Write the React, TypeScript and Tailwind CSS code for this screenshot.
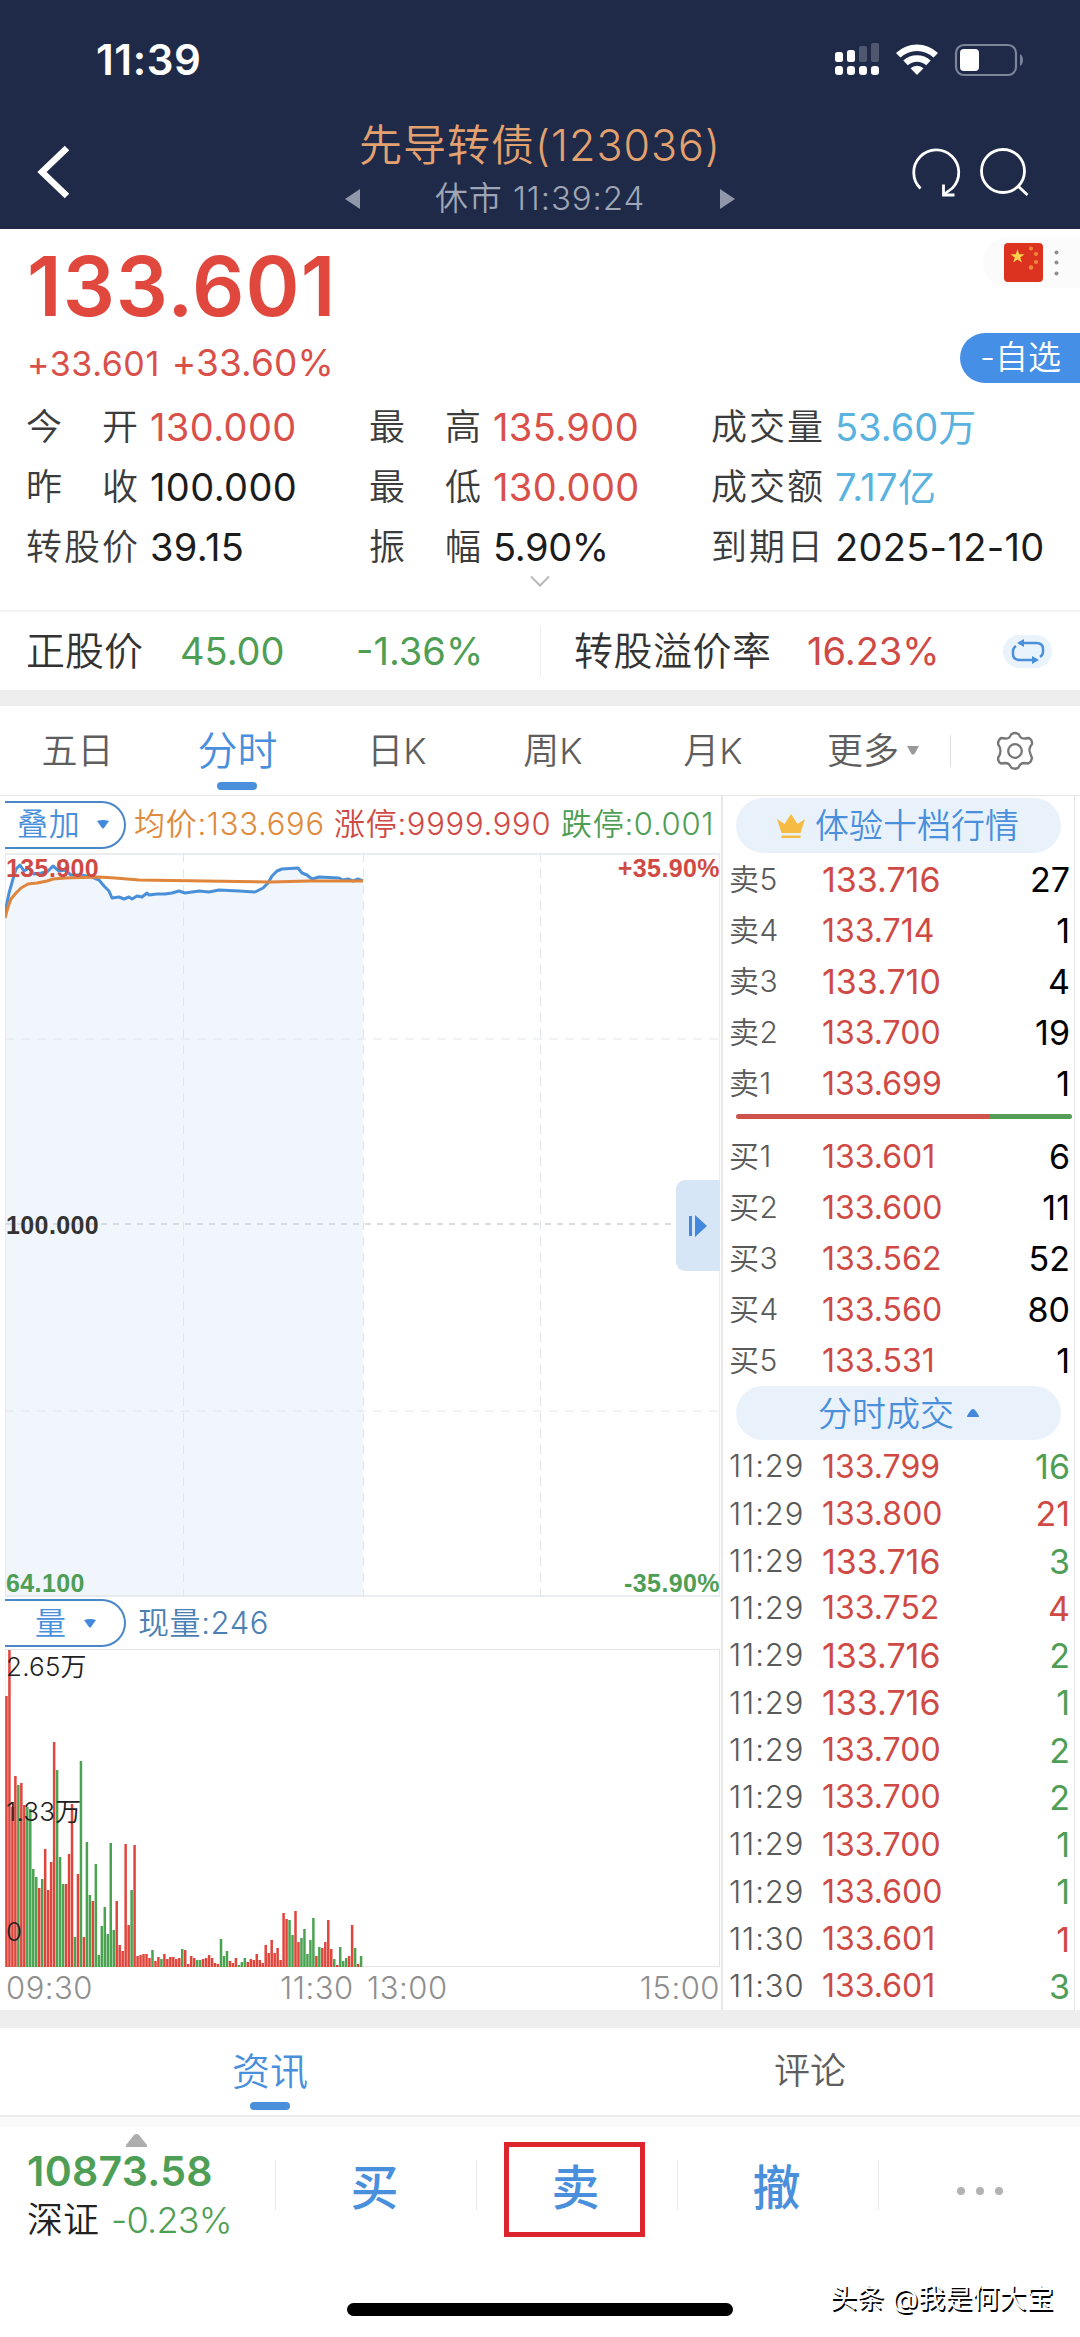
import { Fragment } from "react";
import clsx from "clsx";

type Side = "up" | "down";

const sells = [
    { label: "卖5", price: "133.716", qty: 27, wide: true },
    { label: "卖4", price: "133.714", qty: 1 },
    { label: "卖3", price: "133.710", qty: 4, wide: true },
    { label: "卖2", price: "133.700", qty: 19 },
    { label: "卖1", price: "133.699", qty: 1 },
];

const buys = [
    { label: "买1", price: "133.601", qty: 6 },
    { label: "买2", price: "133.600", qty: 11 },
    { label: "买3", price: "133.562", qty: 52 },
    { label: "买4", price: "133.560", qty: 80 },
    { label: "买5", price: "133.531", qty: 1 },
];

const trades: { time: string; price: string; qty: number; side: Side; wide?: boolean }[] = [
    { time: "11:29", price: "133.799", qty: 16, side: "down" },
    { time: "11:29", price: "133.800", qty: 21, side: "up" },
    { time: "11:29", price: "133.716", qty: 3, side: "down", wide: true },
    { time: "11:29", price: "133.752", qty: 4, side: "up" },
    { time: "11:29", price: "133.716", qty: 2, side: "down", wide: true },
    { time: "11:29", price: "133.716", qty: 1, side: "down", wide: true },
    { time: "11:29", price: "133.700", qty: 2, side: "down" },
    { time: "11:29", price: "133.700", qty: 2, side: "down" },
    { time: "11:29", price: "133.700", qty: 1, side: "down" },
    { time: "11:29", price: "133.600", qty: 1, side: "down" },
    { time: "11:30", price: "133.601", qty: 1, side: "up" },
    { time: "11:30", price: "133.601", qty: 3, side: "down" },
];

// one entry per minute: bar height, then r(ed) or g(reen)
const volume =
    "271r 317r 160r 191r 182g 184r 162r 160g 158g 98g 90g 79r 88g 118r 77r 105r 225r 197g 110g 83g 83r 113r 163r 30g 93r 206g 30r 125g 72g 66r 103g 12g 41g 60g 33g 124g 37g 66r 22r 16r 123r 42r 77g 122r 11r 12r 13r 13r 9r 17g 6r 10r 8g 13r 8r 10r 10r 8r 9r 18g 17r 3r 11r 9r 7g 7g 8r 9r 12r 9r 4r 3r 28g 11g 16g 6r 4r 9r 2g 5g 9g 5r 8r 7r 13r 7r 4r 22r 14r 27r 14r 19r 7r 54r 48r 47g 32g 56r 25r 29g 38g 13g 27g 49g 11r 20g 19r 25r 47r 18r 8g 2r 20g 6g 9g 11r 42r 19g 3r 11g"
        .split(" ")
        .map((v) => ({ h: parseInt(v), up: v.endsWith("r") }));

const priceLine =
    "0,60 4,40 8,26 11,16 15,12 19,18 24,15 29,21 36,20 42,19 48,13 54,18 60,17 66,22 76,22 87,24 94,27 99,33 104,38 107,45 114,44 119,46 124,44 127,46 132,43 137,44 142,40 144,42 152,41 160,41 167,40 174,38 180,40 194,38 204,39 214,37 234,38 250,39 258,35 263,30 267,23 272,18 277,16 293,15 297,20 302,22 307,26 314,24 334,25 338,27 343,26 348,28 353,26 358,28";
const avgLine =
    "0,65 3,54 6,46 11,40 16,35 23,31 32,30 42,28 48,26 60,25 94,24 110,25 134,27 200,28 266,29 304,28 358,28";

function Header() {
    return (
        <header className="h-[229px] bg-[#1f2a48] flex flex-col shrink-0">
            <div className="h-[119px] flex items-center justify-between pl-[96px] pr-[57px]">
                <span className="text-white text-[42px] font-semibold tracking-[0.6px]">11:39</span>
                <svg width="188" height="32" viewBox="835 43 188 32" fill="#fff" className="overflow-visible">
                    <rect x="835" y="51" width="8" height="10" rx="2.5" />
                    <rect x="847" y="49" width="8" height="12" rx="2.5" />
                    <rect x="859" y="45" width="8" height="16" rx="2" opacity=".22" />
                    <rect x="871" y="42" width="8" height="19" rx="2" opacity=".22" />
                    <rect x="835" y="65" width="8" height="9" rx="3" />
                    <rect x="847" y="65" width="8" height="9" rx="3" />
                    <rect x="859" y="65" width="8" height="9" rx="3" />
                    <rect x="871" y="65" width="8" height="9" rx="3" />
                    <path d="M896 52a30.5 30.5 0 0 1 42 0l-4.500 4.600a24 24 0 0 0-33 0z" />
                    <path d="M903.300 59.600a20 20 0 0 1 27.400 0l-4.500 4.700a13.500 13.500 0 0 0-18.400 0z" />
                    <path d="M910.500 67.200a9.500 9.500 0 0 1 13 0L917 74z" />
                    <rect x="956" y="44" width="60" height="30" rx="8" fill="none" stroke="#7c849a" strokeWidth="2.200" />
                    <rect x="960" y="48" width="19" height="22" rx="4" />
                    <path d="M1020 53c4 2 4 10 0 12z" fill="#7c849a" />
                </svg>
            </div>
            <div className="h-[110px] flex">
                <svg width="345" height="110" viewBox="0 119 345 110" className="shrink-0">
                    <path d="M67 148 42 172l25 24" fill="none" stroke="#fff" strokeWidth="6.500" />
                </svg>
                <div className="w-[390px] shrink-0 flex flex-col items-center text-center whitespace-nowrap font-[350]">
                    <h1 className="h-[52px] leading-[52px] text-[43px] text-[#e3a16f] tracking-[1px]">先导转债(123036)</h1>
                    <div className="w-full h-[56px] flex items-center justify-between">
                        <svg width="15" height="20" viewBox="0 0 15 20">
                            <path d="M0 10 15 0v20z" fill="#8f97a9" />
                        </svg>
                        <span className="text-[33px] text-[#9ea5b5] tracking-[0.9px]">休市 11:39:24</span>
                        <svg width="15" height="20" viewBox="0 0 15 20">
                            <path d="M15 10 0 0v20z" fill="#8f97a9" />
                        </svg>
                    </div>
                </div>
                <svg width="345" height="110" viewBox="735 119 345 110" fill="none" stroke="#fff" strokeWidth="2.800" className="shrink-0">
                    <path d="M920.500 188.500a22.500 22.500 0 1 1 32-.500l-8 6" strokeLinejoin="round" />
                    <path d="M943.500 184.500v10.500h11" />
                    <circle cx="1003" cy="171" r="21.500" />
                    <path d="m1018 186 9.500 9" />
                </svg>
            </div>
        </header>
    );
}

function Stat({ label, value, color }: { label: string; value: string; color: string }) {
    return (
        <div className="flex items-center h-[60px] whitespace-nowrap">
            <span className="w-[112px] flex justify-between text-[36px] font-[350] text-[#3c3c3c] shrink-0">
                {label.split("").map((c) => (
                    <span key={c}>{c}</span>
                ))}
            </span>
            <span className={clsx("ml-[12px] text-[38px]", color)}>{value}</span>
        </div>
    );
}

function Quote() {
    return (
        <section className="h-[381px] shrink-0 flex flex-col">
            <div className="h-[168px] flex justify-between">
                <div className="pl-[27px] text-[#e0483e]">
                    <div className="h-[116px] leading-[116px] text-[82px] font-semibold tracking-[1px]">133.601</div>
                    <div className="h-[36px] flex items-baseline gap-[12px] leading-[36px] text-[#d9504a]">
                        <span className="text-[34px] tracking-[0.6px]">+33.601</span>
                        <span className="text-[37px] tracking-[0.1px]">+33.60%</span>
                    </div>
                </div>
                <div className="pt-[8px] flex flex-col items-end">
                    <div className="w-[97px] h-[51px] rounded-l-full bg-[#fbfbfb] flex items-center pl-[21px] gap-[11px]">
                        <svg width="39" height="39" viewBox="0 0 39 39">
                            <rect width="39" height="39" rx="4" fill="#dc3220" />
                            <path d="m13.500 6 1.700 5.200h5.400l-4.400 3.200 1.700 5.200-4.400-3.200-4.400 3.200 1.700-5.200-4.400-3.200h5.400z" fill="#fcd34d" />
                            <g fill="#f0883c">
                                <circle cx="27" cy="5.500" r="2" />
                                <circle cx="32" cy="11" r="2" />
                                <circle cx="32" cy="19" r="2" />
                                <circle cx="27" cy="24.500" r="2.300" />
                            </g>
                        </svg>
                        <svg width="5" height="26" viewBox="0 0 5 26" fill="#8f8f8f">
                            <circle cx="2.500" cy="2.500" r="2" />
                            <circle cx="2.500" cy="12.500" r="2" />
                            <circle cx="2.500" cy="23.500" r="2" />
                        </svg>
                    </div>
                    <button className="mt-[45px] w-[120px] h-[50px] rounded-l-full bg-[#468fe6] text-white text-[33px] font-[350] flex items-center pl-[20px]">-自选</button>
                </div>
            </div>
            <div className="grid grid-cols-[343px_342px_1fr] pl-[26px]">
                <Stat label="今开" value="130.000" color="text-[#d9504a] tracking-[0.4px]" />
                <Stat label="最高" value="135.900" color="text-[#d9504a] tracking-[0.4px]" />
                <Stat label="成交量" value="53.60万" color="text-[#5ab3df] font-[370]" />
                <Stat label="昨收" value="100.000" color="text-[#1c1c1c] tracking-[0.4px]" />
                <Stat label="最低" value="130.000" color="text-[#d9504a] tracking-[0.4px]" />
                <Stat label="成交额" value="7.17亿" color="text-[#5ab3df] font-[370] tracking-[0.4px]" />
                <Stat label="转股价" value="39.15" color="text-[#1c1c1c] tracking-[0.4px]" />
                <Stat label="振幅" value="5.90%" color="text-[#1c1c1c] tracking-[-0.4px]" />
                <Stat label="到期日" value="2025-12-10" color="text-[#1c1c1c] tracking-[0.3px]" />
            </div>
            <svg width="20" height="12" viewBox="0 0 20 12" className="mx-auto -mt-0.5">
                <path d="m1 1.500 9 9 9-9" fill="none" stroke="#b8b8b8" strokeWidth="2" />
            </svg>
        </section>
    );
}

function Underlying() {
    return (
        <section className="h-[80px] shrink-0 border-t-2 border-[#f2f2f2] flex items-center whitespace-nowrap text-[38px]">
            <span className="w-[153px] pl-[26px] font-[350] text-[#333] text-[39px]">正股价</span>
            <span className="w-[177px] pl-[27px] text-[#4f9e55]">45.00</span>
            <span className="w-[210px] pl-[26px] text-[#4f9e55]">-1.36%</span>
            <span className="w-px h-[50px] bg-[#eee]" />
            <span className="w-[232px] pl-[33px] font-[350] text-[#333] text-[39px] tracking-[0.5px]">转股溢价率</span>
            <span className="w-[230px] pl-[34px] text-[#cf4a45]">16.23%</span>
            <span className="w-[49px] h-[33px] rounded-full bg-[#e9f3fc] flex items-center justify-center">
                <svg width="34" height="26" viewBox="0 0 34 26" fill="none" stroke="#4a90d9" strokeWidth="2.500">
                    <path d="M8 5h17q7 0 7 6v3q0 3-3 5" />
                    <path d="M26 22H9q-7 0-7-6v-3q0-3 3-5" />
                    <path d="M13 1v8L6 5z" fill="#4a90d9" stroke="none" />
                    <path d="M21 18v8l7-4z" fill="#4a90d9" stroke="none" />
                </svg>
            </span>
        </section>
    );
}

function PeriodTabs() {
    return (
        <nav className="h-[90px] shrink-0 border-b border-[#e6e6e6] flex items-center text-[36px] font-[350] text-[#5e5e5e] whitespace-nowrap">
            <span className="w-[155px] text-center">五日</span>
            <span className="relative w-[165px] text-center text-[40px] text-[#4a8fdb]">
                分时
                <i className="absolute left-[62px] top-[61px] w-[40px] h-[8px] rounded-full bg-[#4a8fdb]" />
            </span>
            <span className="w-[154px] text-center">日K</span>
            <span className="w-[158px] text-center">周K</span>
            <span className="w-[162px] text-center">月K</span>
            <span className="w-[156px] pl-[33px] flex items-center gap-[8px]">
                更多
                <svg width="12" height="9" viewBox="0 0 12 9">
                    <path d="M0 0h12L7.500 8q-1.500 1-3 0z" fill="#999" />
                </svg>
            </span>
            <span className="w-px h-[32px] bg-[#ddd]" />
            <svg width="40" height="40" viewBox="0 0 40 40" fill="none" stroke="#777" strokeWidth="2.300" className="ml-[44px]">
                <path
                    d="M16 3.500q4-3 8 0 1.500 4.500 6 4l4-.500q3.500 2 3 6-3 3.500-2.500 7 1 3.500 2.500 7-.500 4-4 5.500l-4-.500q-4 0-5.500 4.500-3.500 2.500-7.500 0-1.500-4.500-5.500-4.500l-4.500.500q-3-1.500-3-5.500 2.500-3.500 2.500-7t-2.500-7q0-4 3-6l4.500.500q4 .500 5.500-4z"
                    strokeLinejoin="round"
                />
                <circle cx="20" cy="20" r="6.800" />
            </svg>
        </nav>
    );
}

function Pill({ children, className }: { children: string; className: string }) {
    return (
        <div
            className={clsx(
                "w-[121px] h-[48px] shrink-0 border-2 border-l-0 border-[#4a86c8] rounded-r-full flex items-center text-[31px] font-[350] text-[#4a8fdb]",
                className,
            )}
        >
            {children}
            <svg width="12" height="9" viewBox="0 0 12 9">
                <path d="M0 1q6-2 12 0L7 8q-1 1-2 0z" fill="#4289dc" />
            </svg>
        </div>
    );
}

function Charts() {
    return (
        <div className="w-[718px] ml-[5px] shrink-0 border-r-2 border-[#e8e8e8] flex flex-col whitespace-nowrap">
            <div className="h-[57px] shrink-0 flex items-center text-[31px] font-[350] tracking-[0.7px]">
                <Pill className="pl-[12px] gap-[17px]">叠加</Pill>
                <span className="ml-[8px] w-[200px] text-[#e08b3c]">均价:133.696</span>
                <span className="w-[227px] text-[#cf4a45]">涨停:9999.990</span>
                <span className="text-[#4f9e55]">跌停:0.001</span>
            </div>

            <div className="relative h-[744px] shrink-0 font-['Liberation_Sans',Arial,sans-serif] text-[25px] leading-[26px] font-bold tracking-[0.4px]">
                <svg width="715" height="744" viewBox="0 0 715 744" className="block">
                    <polygon points={`0,744 ${priceLine} 358,744`} fill="#f1f6fd" />
                    <g stroke="#e2e6ea" strokeWidth="1.500" fill="none">
                        <path d="M178.500 0v744M358.500 0v744M535.500 0v744M0 186h715M0 558h715" strokeDasharray="9 7" strokeWidth="1" />
                        <path d="M0 371h715" stroke="#cdd3da" strokeDasharray="6 6" />
                        <path d="M0 1h715v742H0z" stroke="#e4e8ec" />
                    </g>
                    <polyline points={priceLine} fill="none" stroke="#4a90d9" strokeWidth="3" strokeLinejoin="round" />
                    <polyline points={avgLine} fill="none" stroke="#e0853c" strokeWidth="3" strokeLinejoin="round" />
                </svg>
                <span className="absolute left-[1px] top-[2px] text-[#cf4a45]">135.900</span>
                <span className="absolute right-[1px] top-[2px] text-[#cf4a45]">+35.90%</span>
                <span className="absolute left-[1px] top-[359px] text-[#333]">100.000</span>
                <span className="absolute left-[1px] bottom-[1px] text-[#4f9e55]">64.100</span>
                <span className="absolute right-[1px] bottom-[1px] text-[#4f9e55]">-35.90%</span>
                <div className="absolute right-[1px] top-[327px] w-[44px] h-[91px] rounded-l-[9px] bg-[#d7e6f6] flex items-center pl-[13px]">
                    <svg width="18" height="24" viewBox="0 0 18 24" fill="#4289dc">
                        <path d="M0 2h3v20H0zM6 1l12 11L6 23z" />
                    </svg>
                </div>
            </div>

            <div className="h-[52px] shrink-0 flex items-center text-[31px] font-[350] tracking-[0.6px]">
                <Pill className="pl-[30px] gap-[17px]">量</Pill>
                <span className="ml-[12px] text-[#4a80b4]">现量:246</span>
            </div>

            <div className="relative h-[318px] shrink-0 text-[26px] leading-[28px] font-[350] text-[#222] tracking-[0.2px]">
                <svg width="715" height="318" viewBox="0 0 715 318" className="block">
                    <path d="M0 .500h714.500v317H0z" fill="none" stroke="#e4e4e4" />
                    {volume.map((v, i) => (
                        <rect key={i} x={0.2 + i * 2.98} y={318 - v.h} width="2.500" height={v.h} fill={v.up ? "#e0453c" : "#4ba352"} />
                    ))}
                </svg>
                <span className="absolute left-[1px] top-[4px]">2.65万</span>
                <span className="absolute left-[1px] top-[149px]">1.33万</span>
                <span className="absolute left-[1px] top-[269px]">0</span>
            </div>

            <div className="h-[43px] flex items-center text-[31px] font-[350] text-[#8f8f8f] tracking-[0.5px]">
                <span className="w-[275px] pl-[1px]">09:30</span>
                <span className="w-[87px]">11:30</span>
                <span>13:00</span>
                <span className="ml-auto pr-[1px]">15:00</span>
            </div>
        </div>
    );
}

function Price({ value, wide }: { value: string; wide?: boolean }) {
    return <span className={clsx("text-[#cf4a45]", wide ? "text-[34px]" : "text-[32px]")}>{value}</span>;
}

function BookRow({ label, price, qty, wide }: { label: string; price: string; qty: number; wide?: boolean }) {
    return (
        <div className="h-[51px] flex items-center">
            <span className="w-[93px] text-[30px] font-[350] text-[#5a5a5a] tracking-[0.5px]">{label}</span>
            <Price value={price} wide={wide} />
            <span className="ml-auto text-[34px] text-black">{qty}</span>
        </div>
    );
}

function OrderBook() {
    return (
        <aside className="w-[352px] shrink-0 border-r border-[#e6e6e6] flex flex-col whitespace-nowrap">
            <div className="mt-[2px] ml-[13px] w-[325px] h-[55px] shrink-0 rounded-full bg-[#e9f2fb] flex items-center pl-[41px] text-[34px] font-[350] text-[#4a8fdb]">
                <svg width="28" height="26" viewBox="0 0 28 26" fill="#f6bb42" className="mr-[10px]">
                    <path d="M0 6l7.500 5L14 1l6.500 10L28 6l-4.500 14h-19zM4.500 22.500h19V25h-19z" />
                </svg>
                体验十档行情
            </div>
            <div className="mt-[1px] pl-[6px] pr-[4px]">
                {sells.map((r) => (
                    <BookRow key={r.label} {...r} />
                ))}
            </div>
            <div className="mt-[5px] ml-[13px] w-[336px] h-[5px] shrink-0 rounded-full overflow-hidden flex">
                <i className="w-[254px] bg-[#d0524d]" />
                <i className="flex-1 bg-[#559c57]" />
            </div>
            <div className="mt-[12px] pl-[6px] pr-[4px]">
                {buys.map((r) => (
                    <BookRow key={r.label} {...r} />
                ))}
            </div>
            <div className="ml-[13px] w-[325px] h-[54px] shrink-0 rounded-full bg-[#e9f2fb] flex items-center pl-[82px] text-[34px] font-[350] text-[#4a8fdb]">
                分时成交
                <svg width="12" height="8" viewBox="0 0 12 8" className="ml-[13px]">
                    <path d="M0 8q0-2 4-7 2-2 4 0 4 5 4 7z" fill="#4289dc" />
                </svg>
            </div>
            <div className="mt-[3px] pl-[6px] pr-[4px]">
                {trades.map((t, i) => (
                    <div key={i} className="h-[47.250px] flex items-center">
                        <span className="w-[93px] text-[31px] font-[350] text-[#5a5a5a] tracking-[0.9px]">{t.time}</span>
                        <Price value={t.price} wide={t.wide} />
                        <span className={clsx("ml-auto text-[34px]", t.side === "up" ? "text-[#cf4a45]" : "text-[#4f9e55]")}>{t.qty}</span>
                    </div>
                ))}
            </div>
        </aside>
    );
}

function BottomTabs() {
    return (
        <nav className="h-[99px] shrink-0 bg-[#fafafa] pb-[10px]">
            <div className="h-[89px] bg-white border-b-2 border-[#ececec] grid grid-cols-2 text-center font-[350] whitespace-nowrap">
                <span className="relative leading-[86px] text-[38px] text-[#4a8fdb]">
                    资讯
                    <i className="absolute left-[250px] top-[74px] w-[40px] h-[8px] rounded-full bg-[#4a8fdb]" />
                </span>
                <span className="leading-[86px] text-[36px] text-[#5e5e5e]">评论</span>
            </div>
        </nav>
    );
}

function ActionBar() {
    return (
        <footer className="relative h-[210px] shrink-0 whitespace-nowrap">
            <div className="flex h-[123px]">
                <div className="w-[275px] pl-[27px] flex flex-col">
                    <svg width="21" height="13" viewBox="0 0 21 13" className="mt-[7px] ml-[99px]">
                        <path d="M0 13v-2L8 1q2.500-2 5 0l8 10v2z" fill="#adadad" />
                    </svg>
                    <span className="mt-[3px] h-[42px] leading-[42px] text-[41px] font-semibold text-[#4f9e55] tracking-[0.3px]">10873.58</span>
                    <span className="mt-[6px] h-[44px] leading-[44px] flex text-[36px] font-[350] text-[#222]">
                        <span className="w-[84px]">深证</span>
                        <span className="text-[#4f9e55] tracking-[-0.8px]">-0.23%</span>
                    </span>
                </div>
                {["买", "卖", "撤"].map((a) => (
                    <Fragment key={a}>
                        <i className="w-px h-[50px] mt-[33px] bg-[#e9e9e9]" />
                        <button className="relative w-[200px] h-[122px] pr-[3px] text-[48px] font-medium text-[#4a8fdb]">
                            {a}
                            {a === "卖" && <i className="absolute left-[27px] top-[15px] w-[141px] h-[95px] border-[5px] border-[#dc252c]" />}
                        </button>
                    </Fragment>
                ))}
                <i className="w-px h-[50px] mt-[33px] bg-[#e9e9e9]" />
                <div className="flex-1 flex items-center justify-center">
                    <svg width="48" height="10" viewBox="0 0 48 10" fill="#b3b3b3" className="mt-[4px]">
                        <circle cx="5" cy="5" r="4" />
                        <circle cx="24" cy="5" r="4" />
                        <circle cx="43" cy="5" r="4" />
                    </svg>
                </div>
            </div>
            <div className="mx-auto mt-[53px] w-[386px] h-[13px] rounded-full bg-black" />
            <span className="absolute left-[830px] top-[154px] text-[27px] leading-[36px] tracking-[0.1px] text-white [text-shadow:1.500px_1.500px_0_#000]">头条 @我是何大宝</span>
        </footer>
    );
}

export default function App() {
    return (
        <div className="w-[1080px] h-[2337px] overflow-hidden bg-white flex flex-col font-['Inter','Noto_Sans_CJK_SC',sans-serif]">
            <Header />
            <Quote />
            <Underlying />
            <div className="h-[16px] shrink-0 bg-[#eee]" />
            <PeriodTabs />
            <main className="h-[1214px] shrink-0 flex">
                <Charts />
                <OrderBook />
            </main>
            <div className="h-[18px] shrink-0 bg-[#eee]" />
            <BottomTabs />
            <ActionBar />
        </div>
    );
}
